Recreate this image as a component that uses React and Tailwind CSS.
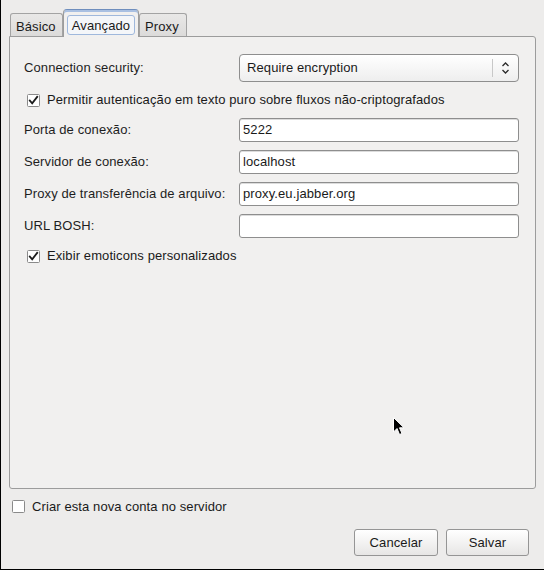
import React from 'react';

const font = { fontFamily: '"Liberation Sans", Arial, sans-serif' };

function CheckBox({ checked }) {
  return (
    <svg width="13" height="13" viewBox="0 0 13 13" className="shrink-0">
      <rect x="0.5" y="0.5" width="12" height="12" rx="1" fill="#ffffff" stroke="#8a8a8a" />
      {checked && (
        <path d="M2.8 6.6 L5.2 9.4 L10.2 2.8" fill="none" stroke="#1c1c1c" strokeWidth="1.8" strokeLinecap="square" />
      )}
    </svg>
  );
}

function TextInput({ value }) {
  return (
    <div className="h-[24px] w-[280px] rounded-[3px] border border-[#8e8e8e] bg-white px-[3px] flex items-center text-[13px] text-[#1a1a1a] shadow-[inset_0_1px_0_#dcdcdc]">
      {value}
    </div>
  );
}

function Row({ label, children }) {
  return (
    <div className="flex items-center">
      <div className="w-[215px] text-[13px] text-[#1e1e1e]">{label}</div>
      {children}
    </div>
  );
}

function Tab({ label, active }) {
  if (active) {
    return (
      <div className="relative z-10 -mb-px h-[28px] w-[76px] rounded-t-[4px] border border-b-0 border-[#9c9c9c] border-t-[#6f8ebd] bg-[#f1f0ef] shadow-[inset_0_2px_0_#a9c0e2] px-[3px] pt-[5px]">
        <div className="h-[20px] rounded-[3px] border border-[#9fb8dc] bg-[#f4f6f9] flex items-center justify-center pt-[1px] text-[13px] text-[#1a1a1a]">
          {label}
        </div>
      </div>
    );
  }
  return (
    <div className="h-[23px] rounded-t-[3px] border border-b-0 border-[#a3a3a3] bg-gradient-to-b from-[#e9e8e7] to-[#dcdbda] px-[5px] pt-[3px] flex items-center text-[13px] text-[#1a1a1a]">
      {label}
    </div>
  );
}

export default function App() {
  return (
    <div style={font} className="relative w-[544px] h-[570px] overflow-hidden bg-[#edeceb] border-l border-b border-black text-[#1a1a1a] tracking-[0.1px]">
      <div className="flex items-end h-[36px] pl-[9px]">
        <div className="w-[53px]">
          <Tab label="Básico" />
        </div>
        <Tab label="Avançado" active />
        <div className="w-[48px]">
          <Tab label="Proxy" />
        </div>
      </div>

      <div className="ml-[8px] w-[527px] h-[453px] rounded-b-[3px] rounded-tr-[3px] border border-[#9c9c9c] bg-[#f1f0ef] pl-[14px] pt-[17px]">
        <div className="flex flex-col gap-2">
          <Row label="Connection security:">
            <div className="h-[28px] w-[280px] rounded-[4px] border border-[#8e8e8e] bg-gradient-to-b from-[#ffffff] to-[#eeeeee] flex items-center">
              <div className="flex-1 pl-[7px] text-[13px]">Require encryption</div>
              <div className="h-[18px] w-px bg-[#c8c8c8]" />
              <div className="w-[25px] flex items-center justify-center">
                <svg width="9" height="14" viewBox="0 0 9 14">
                  <path d="M1.5 5 L4.5 2 L7.5 5 M1.5 9 L4.5 12 L7.5 9" fill="none" stroke="#2a2a2a" strokeWidth="1.3" />
                </svg>
              </div>
            </div>
          </Row>
          <div className="h-[20px] flex items-center pl-[3px] gap-[7px] text-[13px]">
            <CheckBox checked />
            <span>Permitir autenticação em texto puro sobre fluxos não-criptografados</span>
          </div>
          <Row label="Porta de conexão:">
            <TextInput value="5222" />
          </Row>
          <Row label="Servidor de conexão:">
            <TextInput value="localhost" />
          </Row>
          <Row label="Proxy de transferência de arquivo:">
            <TextInput value="proxy.eu.jabber.org" />
          </Row>
          <Row label="URL BOSH:">
            <TextInput value="" />
          </Row>
          <div className="h-[20px] flex items-center pl-[3px] gap-[7px] text-[13px]">
            <CheckBox checked />
            <span>Exibir emoticons personalizados</span>
          </div>
        </div>
      </div>

      <div className="mt-[11px] h-[13px] flex items-center pl-[11px] gap-[7px] text-[13px]">
        <CheckBox />
        <span>Criar esta nova conta no servidor</span>
      </div>

      <div className="mt-[16px] flex justify-end gap-[8px] pr-[15px]">
        <button className="h-[27px] w-[84px] rounded-[3px] border border-[#959595] bg-gradient-to-b from-[#ffffff] to-[#e7e6e5] text-[13px] text-[#1a1a1a]">
          Cancelar
        </button>
        <button className="h-[27px] w-[83px] rounded-[3px] border border-[#959595] bg-gradient-to-b from-[#ffffff] to-[#e7e6e5] text-[13px] text-[#1a1a1a]">
          Salvar
        </button>
      </div>

      <svg className="absolute left-[391px] top-[416px]" width="14" height="21" viewBox="0 0 14 21">
        <path d="M1.5 1.5 L1.5 16 L5 12.5 L7.5 18.5 L10 17.5 L7.5 11.8 L12 11.8 Z" fill="#000" stroke="#fff" strokeWidth="1" strokeLinejoin="round" />
      </svg>
    </div>
  );
}
